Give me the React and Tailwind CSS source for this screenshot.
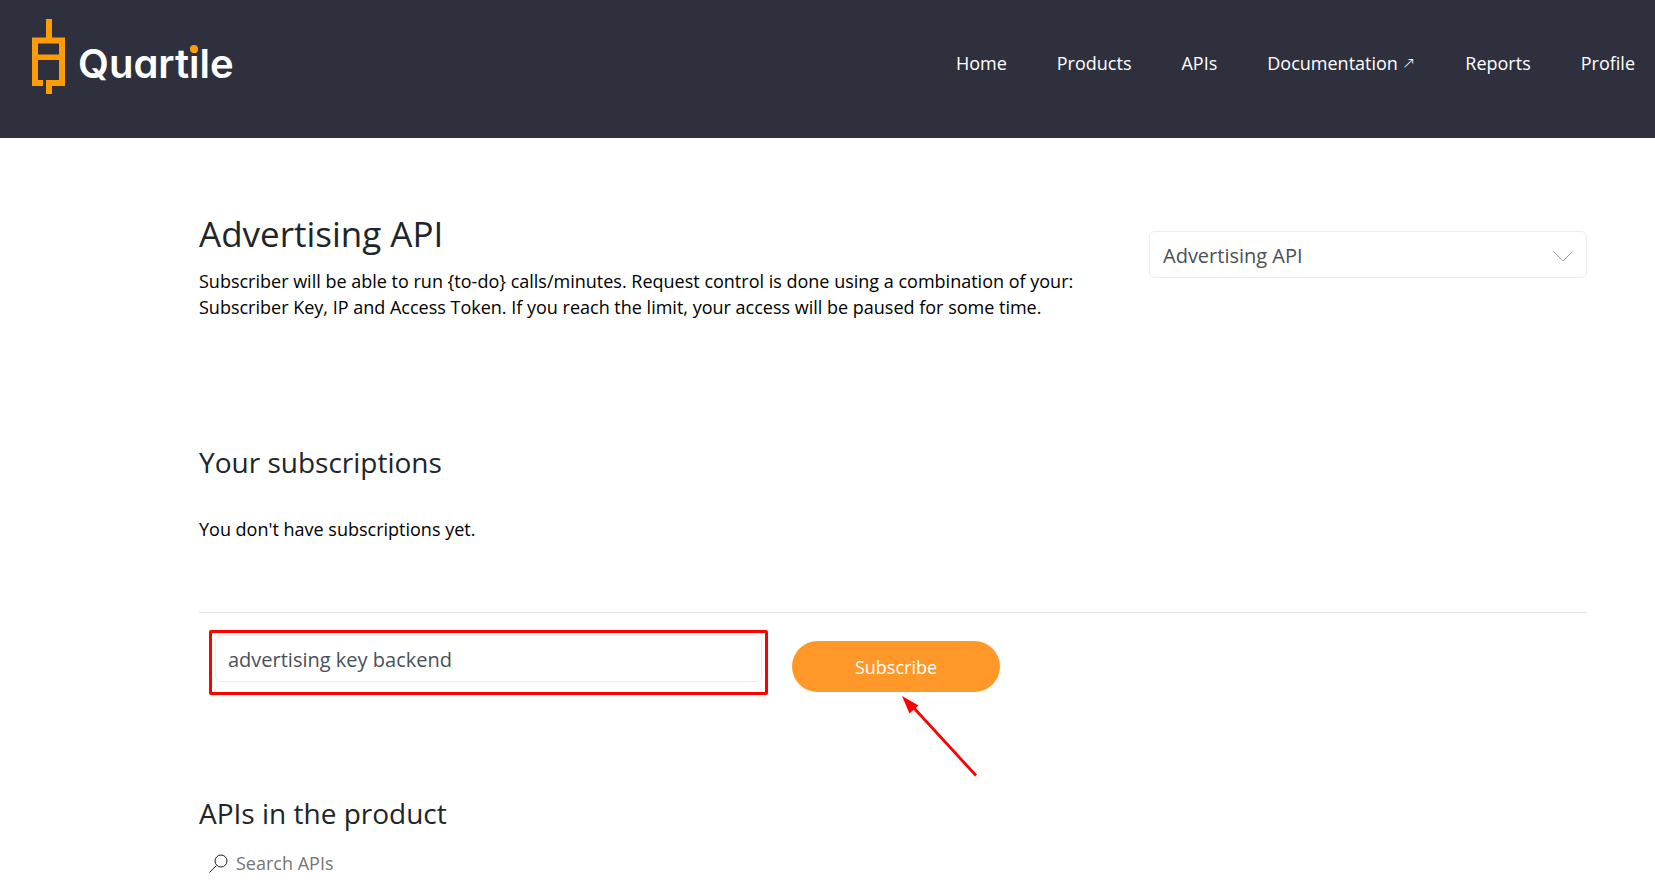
const navItems = [
  { label: "Home" },
  { label: "Products" },
  { label: "APIs" },
  { label: "Documentation", external: true },
  { label: "Reports" },
  { label: "Profile" },
];

const description =
  "Subscriber will be able to run {to-do} calls/minutes. Request control is done using a combination of your: Subscriber Key, IP and Access Token. If you reach the limit, your access will be paused for some time.";

function Logo() {
  return (
    <a href="#home" className="flex items-start text-white">
      <svg width="34" height="76" viewBox="0 0 34 76" fill="#ff9b05" aria-hidden="true">
        <path
          fillRule="evenodd"
          d="M14 0h6v18.500h13V67H20v8h-6V61h7v0h6V41H6v20h5v6H0V18.500h14zM6 24.500v11h21v-11z"
        />
      </svg>
      <span className="mt-5 ml-3 font-['Inter'] text-[40px] leading-[50px] font-semibold [font-feature-settings:'cv11']">
        Quart
        <span className="relative">
          i
          <span className="absolute top-[6px] left-1/2 size-2 -translate-x-1/2 rounded-full bg-[#ff9b05]" />
        </span>
        le
      </span>
    </a>
  );
}

function Header() {
  return (
    <header className="flex min-h-[138px] items-start justify-between bg-[#2f303d] pt-[19px] pr-5 pl-8">
      <Logo />
      <nav className="mt-[31px] flex gap-[50px] text-lg leading-[26px] text-white">
        {navItems.map((item) => (
          <a key={item.label} href="#nav" className="flex gap-1">
            {item.label}
            {item.external && <span className="font-['DejaVu_Sans'] text-base leading-[26px] font-extralight">↗</span>}
          </a>
        ))}
      </nav>
    </header>
  );
}

export default function App() {
  return (
    <div className="min-h-screen bg-white font-['Open_Sans',sans-serif] text-lg leading-[26px] text-black">
      <Header />
      <main className="pt-[72px] pr-[68px] pl-[199px]">
        <section className="flex items-start justify-between gap-8">
          <div className="max-w-[880px]">
            <h1 className="text-[35px] leading-[48px] text-[#212529]">Advertising API</h1>
            <p className="mt-[10px]">{description}</p>
          </div>
          <div className="relative mt-[21px] w-[438px]">
            <select
              aria-label="API product"
              className="h-[47px] w-full appearance-none rounded-md border border-[#ececec] bg-white px-[13px] pt-[2px] text-xl text-[#495057]"
            >
              <option>Advertising API</option>
            </select>
            <svg
              className="pointer-events-none absolute top-[20px] right-[14px]"
              width="20"
              height="11"
              viewBox="0 0 20 11"
              fill="none"
              stroke="#9aa5a8"
              aria-hidden="true"
            >
              <path d="M.5.5 10 10 19.500.5" />
            </svg>
          </div>
        </section>

        <section className="mt-[122px]">
          <h2 className="text-[28px] leading-[40px] text-[#212529]">Your subscriptions</h2>
          <p className="mt-[34px]">You don't have subscriptions yet.</p>
          <form className="mt-[70px] flex items-start border-t border-[#dee2e6] pt-[17px] pl-[10px]">
            <div className="w-[559px] rounded-xs border-[3px] border-[#ff0000] px-[3px] pt-[2px] pb-[10px]">
              <input
                type="text"
                aria-label="Subscription name"
                defaultValue="advertising key backend"
                className="block h-[47px] w-full rounded-md border border-[#ececec] px-[12px] pt-[2px] text-xl text-[#495057]"
              />
            </div>
            <div className="relative mt-[11px] ml-6">
              <button type="button" className="h-[51px] w-[208px] rounded-full bg-[#ff9828] text-white">
                Subscribe
              </button>
              <svg
                className="pointer-events-none absolute top-[54px] left-[109px]"
                width="78"
                height="83"
                viewBox="0 0 78 83"
                aria-hidden="true"
              >
                <path d="M12 12 75 80.500" stroke="#f00" strokeWidth="2.800" fill="none" />
                <path d="M1 1 17.500 10.500 8.500 18.500z" fill="#f00" />
              </svg>
            </div>
          </form>
        </section>

        <section className="mt-[98px]">
          <h2 className="text-[28px] leading-[40px] text-[#212529]">APIs in the product</h2>
          <label className="mt-[17px] flex items-center pl-[10px]">
            <svg width="19" height="19" viewBox="0 0 19 19" fill="none" stroke="#222" aria-hidden="true">
              <circle cx="12" cy="7" r="6" />
              <path d="M7.500 11.500.5 18.500" />
            </svg>
            <input
              type="search"
              aria-label="Search APIs"
              placeholder="Search APIs"
              className="ml-2 h-[26px] w-[300px] placeholder:text-[#757575]"
            />
          </label>
        </section>
      </main>
    </div>
  );
}
